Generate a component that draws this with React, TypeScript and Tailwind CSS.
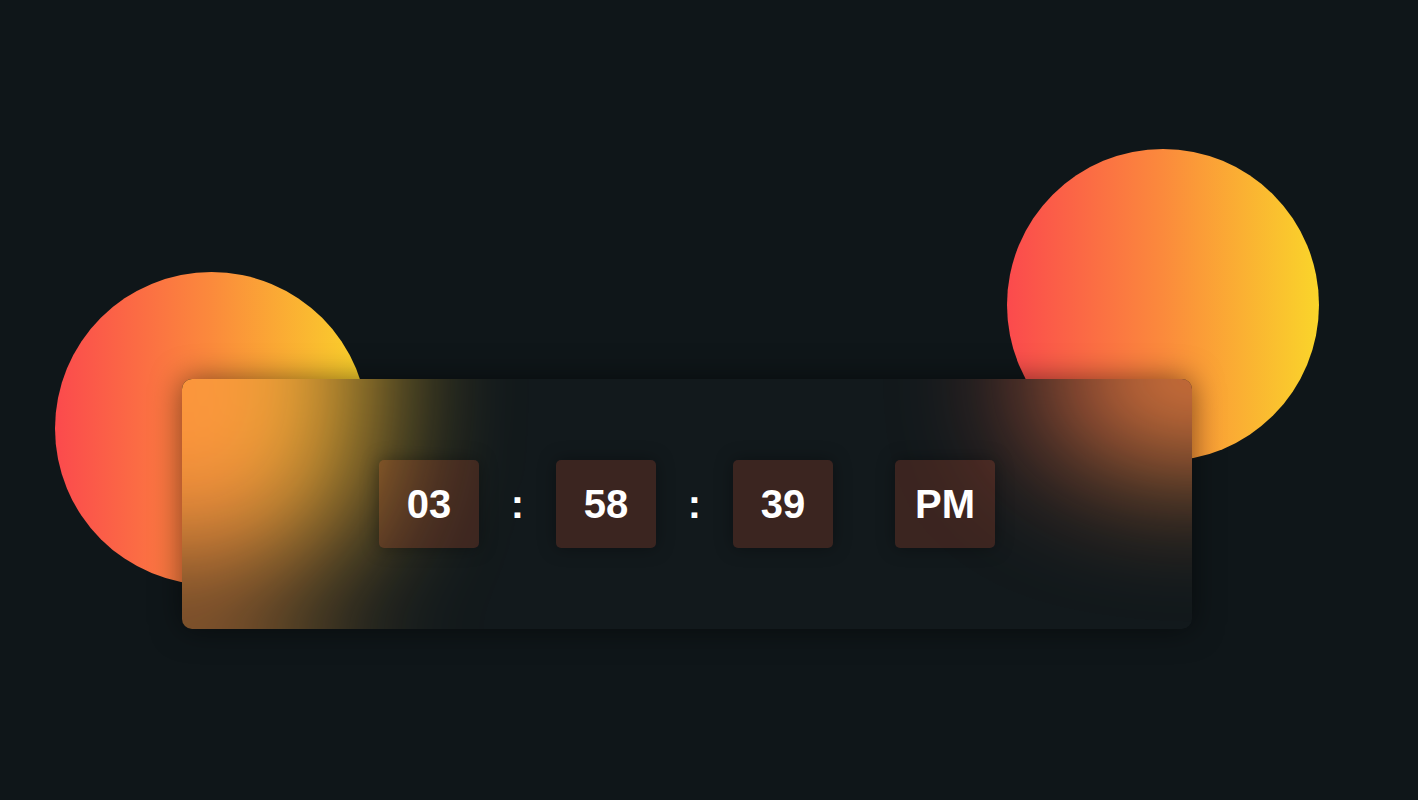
import React from 'react';

const font = { fontFamily: '"Liberation Sans", Arial, sans-serif' };
const blob = 'absolute rounded-full bg-[linear-gradient(to_right,#fb4a4d,#fb8a3c,#fad52a)]';

function Cell({ value }: { value: string }) {
  return (
    <div className="w-[100px] h-[88px] rounded-[5px] bg-[rgba(250,92,58,0.18)] shadow-[0_0_18px_rgba(0,0,0,0.35)] flex items-center justify-center">
      <span className="text-[40px] font-bold text-white leading-none">{value}</span>
    </div>
  );
}

function Colon() {
  return (
    <div className="w-[77px] flex items-center justify-center">
      <span className="text-[40px] font-bold text-white leading-none">:</span>
    </div>
  );
}

// what sits behind the card, cropped to the card
function Backdrop({ flip = '' }: { flip?: string }) {
  return (
    <div className={`relative w-[1010px] h-[250px] overflow-hidden ${flip}`}>
      <div className={`${blob} left-[-127px] top-[-107px] w-[313px] h-[313px]`} />
      <div className={`${blob} left-[825px] top-[-230px] w-[312px] h-[312px]`} />
    </div>
  );
}

export default function App() {
  return (
    <div className="relative w-full h-[800px] bg-[#0f1619] overflow-hidden" style={font}>
      <div className={`${blob} left-[55px] top-[272px] w-[313px] h-[313px]`} />
      <div className={`${blob} left-[1007px] top-[149px] w-[312px] h-[312px]`} />

      <div className="relative pt-[379px] pl-[182px]">
        <div className="relative w-[1010px] h-[250px] rounded-[10px] overflow-hidden bg-[#0f1619] shadow-[0_0_30px_rgba(0,0,0,0.5)]">
          {/* frosted glass, mirrored at the edges like backdrop-filter */}
          <div className="absolute left-[-1010px] top-[-250px] grid grid-cols-[1010px_1010px_1010px] blur-[68px]">
            <Backdrop flip="-scale-100" />
            <Backdrop flip="-scale-y-100" />
            <Backdrop flip="-scale-100" />
            <Backdrop flip="-scale-x-100" />
            <Backdrop />
            <Backdrop flip="-scale-x-100" />
            <Backdrop flip="-scale-100" />
            <Backdrop flip="-scale-y-100" />
            <Backdrop flip="-scale-100" />
          </div>
          <div className="absolute inset-0 bg-white/[0.015]" />

          <div className="relative h-full flex items-center justify-center">
            <Cell value="03" />
            <Colon />
            <Cell value="58" />
            <Colon />
            <Cell value="39" />
            <div className="w-[62px]" />
            <Cell value="PM" />
          </div>
        </div>
      </div>
    </div>
  );
}
